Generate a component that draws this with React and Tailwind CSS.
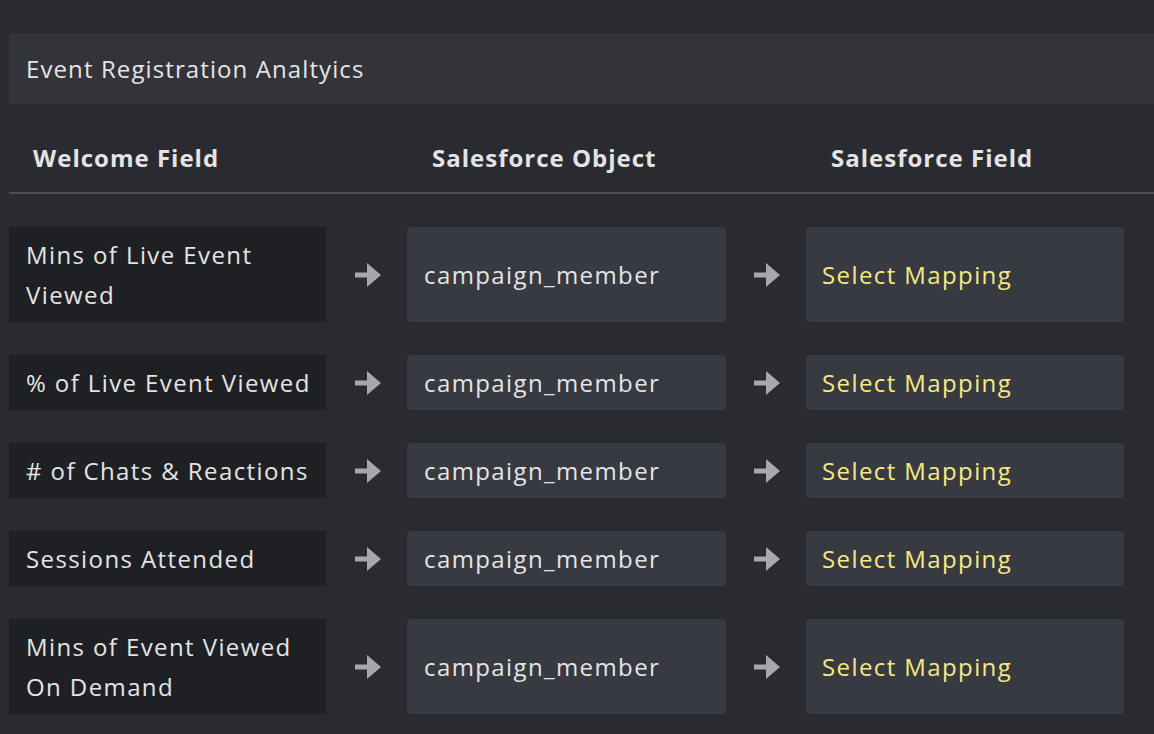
import React from "react";

const rows = [
    "Mins of Live Event Viewed",
    "% of Live Event Viewed",
    "# of Chats & Reactions",
    "Sessions Attended",
    "Mins of Event Viewed On Demand",
];

function Arrow(){
    return (
        <svg width="26" height="24" viewBox="0 0 26 24" className="text-[#a8a8aa]">
            <rect x="0" y="9.5" width="15" height="5" fill="currentColor" />
            <path d="M12 0 L26 12 L12 24 Z" fill="currentColor" />
        </svg>
    );
}

function App(){
    return (
        <div className="min-h-[734px] bg-[#2a2b30] pt-[33px] text-[#e4e4e6] overflow-hidden tracking-[1px]" style={{ fontFamily: '"Open Sans", "Noto Sans", sans-serif' }}>
            <div className="ml-[9px] h-[71px] bg-[#333439] flex items-center pl-[17px] text-[24px] tracking-[1.1px]">
                Event Registration Analtyics
            </div>

            <div className="ml-[9px] flex pt-[36px] pb-[16px] border-b-2 border-[#4c4d52] text-[24px] leading-[36px] font-bold">
                <div className="w-[317px] pl-[24px]">Welcome Field</div>
                <div className="w-[81px]"></div>
                <div className="w-[319px] pl-[25px]">Salesforce Object</div>
                <div className="w-[80px]"></div>
                <div className="w-[318px] pl-[25px]">Salesforce Field</div>
            </div>

            <div className="flex flex-col gap-[33px] pt-[33px] px-[9px]">
                {rows.map((label) => (
                    <div key={label} className="flex items-stretch text-[24px] leading-[40px] tracking-[1.4px]">
                        <div className="w-[317px] bg-[#1f2024] pl-[17px] pr-[6px] py-[7.5px]">{label}</div>
                        <div className="w-[81px] flex items-center justify-center pl-[3px]"><Arrow /></div>
                        <div className="w-[319px] bg-[#383a42] rounded-[4px] px-[17px] flex items-center">campaign_member</div>
                        <div className="w-[80px] flex items-center justify-center pl-[2px]"><Arrow /></div>
                        <div className="w-[318px] bg-[#383a42] rounded-[4px] px-[16px] flex items-center text-[#f6e884]">Select Mapping</div>
                    </div>
                ))}
            </div>
        </div>
    );
}

export default App;
